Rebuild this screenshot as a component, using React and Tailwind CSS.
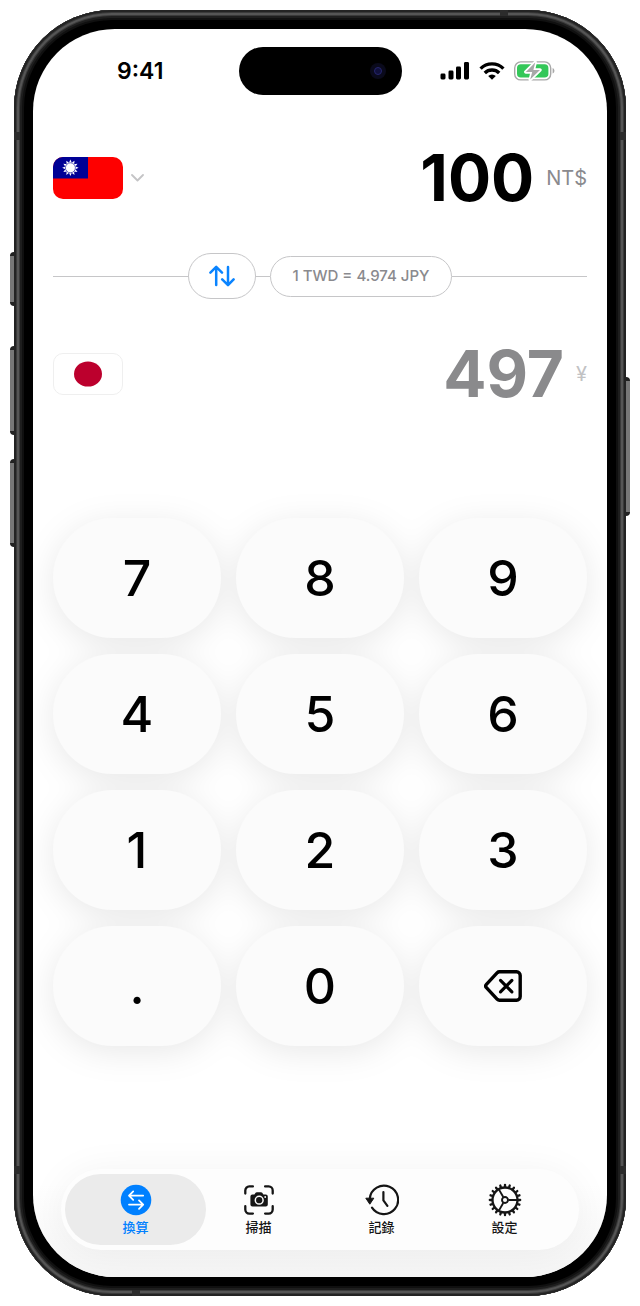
import { useState } from "react";

const keys = ["7", "8", "9", "4", "5", "6", "1", "2", "3", ".", "0", "del"];

const tabs = [
  { id: "convert", label: "換算", Icon: ConvertIcon },
  { id: "scan", label: "掃描", Icon: ScanIcon },
  { id: "history", label: "記錄", Icon: HistoryIcon },
  { id: "settings", label: "設定", Icon: GearIcon },
];

const rate = 4.974;

function SignalIcon() {
  return (
    <svg width="30" height="20" viewBox="0 0 30 20" fill="#000">
      <rect x="0.5" y="12.5" width="5" height="6" rx="1.4" />
      <rect x="8.5" y="9.5" width="5" height="9" rx="1.4" />
      <rect x="16" y="5.5" width="5" height="13" rx="1.4" />
      <rect x="24" y="1" width="5" height="17.5" rx="1.4" />
    </svg>
  );
}

function WifiIcon() {
  return (
    <svg width="26" height="20" viewBox="0 0 26 20" fill="none" stroke="#000" strokeWidth="3.4">
      <path d="M1.6 7.6A16.2 16.2 0 0 1 24.4 7.6" />
      <path d="M5.8 12A10.2 10.2 0 0 1 20.2 12" />
      <path d="M13 18.8 9.2 15A5.4 5.4 0 0 1 16.8 15Z" fill="#000" stroke="none" />
    </svg>
  );
}

function BatteryIcon() {
  return (
    <svg width="41" height="20" viewBox="0 0 41 20" fill="none">
      <rect x="0.7" y="0.9" width="36" height="18" rx="6" stroke="#a8a8a8" strokeWidth="1.4" />
      <rect x="3" y="3.2" width="31.4" height="13.4" rx="3.8" fill="#34c759" />
      <path d="M38.6 7v5.6c1.2-.5 1.8-1.5 1.8-2.8s-.6-2.3-1.8-2.8Z" fill="#a8a8a8" />
      <path
        d="M21.2 1.4 11.8 11h6.4l-2 7.6L26 9h-6.600Z"
        fill="#a8a8a8"
        stroke="#fff"
        strokeWidth="3.4"
        strokeLinejoin="round"
        paintOrder="stroke"
      />
    </svg>
  );
}

function TaiwanFlag() {
  return (
    <svg width="70" height="42" viewBox="0 0 70 42" className="rounded-[10px]">
      <rect width="70" height="42" fill="#fe0000" />
      <rect width="35" height="21.5" fill="#000095" />
      <g transform="translate(17.4 10.8)" fill="#fff">
        {[0, 30, 60, 90, 120, 150, 180, 210, 240, 270, 300, 330].map((deg) => (
          <path key={deg} d="M-1.600-4.500 0-8.200 1.600-4.500Z" transform={`rotate(${deg})`} />
        ))}
        <circle r="5" stroke="#000095" strokeWidth="0.6" />
      </g>
    </svg>
  );
}

function JapanFlag() {
  return (
    <svg width="70" height="42" viewBox="0 0 70 42">
      <rect x="0.5" y="0.5" width="69" height="41" rx="9.5" fill="#fff" stroke="#efefef" />
      <ellipse cx="35" cy="21" rx="14" ry="12.6" fill="#bc002d" />
    </svg>
  );
}

function SwapIcon() {
  return (
    <svg
      width="26"
      height="22"
      viewBox="0 0 26 22"
      fill="none"
      stroke="#0a84ff"
      strokeWidth="2.5"
      strokeLinecap="round"
      strokeLinejoin="round"
    >
      <path d="M7.2 20V2.2M1.4 7.6l5.800-5.800L13 7.600" />
      <path d="M19 2v17.800M13.200 14.400l5.800 5.800 5.600-5.800" />
    </svg>
  );
}

function DeleteIcon() {
  return (
    <svg
      width="38"
      height="32"
      viewBox="0 0 38 32"
      fill="none"
      stroke="#000"
      strokeWidth="3.4"
      strokeLinecap="round"
      strokeLinejoin="round"
    >
      <path d="M15.4 1.8h17.2a3.6 3.6 0 0 1 3.6 3.6v21.2a3.6 3.6 0 0 1-3.6 3.6H15.4a3 3 0 0 1-2.1-.9L2.4 17.6a2.3 2.3 0 0 1 0-3.2L13.3 2.7a3 3 0 0 1 2.1-.9Z" />
      <path d="m16.500 10.400 11.400 11.400M27.900 10.400 16.500 21.800" strokeWidth="3.2" />
    </svg>
  );
}

function ConvertIcon() {
  return (
    <svg width="32" height="32" viewBox="0 0 32 32" fill="none">
      <circle cx="16" cy="16" r="15.3" fill="#0080ff" />
      <g stroke="#fff" strokeWidth="1.8" strokeLinecap="round" strokeLinejoin="round">
        <path d="M23.2 11.6H9.2M13.2 7.4 9 11.6l4.2 4.2" />
        <path d="M9 20.6h14M19 16.4l4.2 4.2-4.2 4.2" />
      </g>
    </svg>
  );
}

function ScanIcon() {
  return (
    <svg width="32" height="32" viewBox="0 0 32 32" fill="none">
      <path
        d="M2.3 9.6V6.4a4 4 0 0 1 4-4h3.6M22.1 2.4h3.6a4 4 0 0 1 4 4v3.2M29.7 22.2v3.4a4 4 0 0 1-4 4h-3.6M9.9 29.6H6.3a4 4 0 0 1-4-4v-3.4"
        stroke="#151515"
        strokeWidth="2.3"
        strokeLinecap="round"
      />
      <path
        d="M9.4 10.400h2l1.200-1.600c.3-.4.7-.6 1.200-.6h4.200c.5 0 .9.2 1.200.6l1.200 1.600h2.400a2 2 0 0 1 2 2v8.200a2 2 0 0 1-2 2H9.400a2 2 0 0 1-2-2v-8.200a2 2 0 0 1 2-2Z"
        fill="#151515"
      />
      <circle cx="16.2" cy="16.2" r="3.9" stroke="#fcfcfc" strokeWidth="1.5" />
      <circle cx="22.2" cy="13" r="0.9" fill="#fcfcfc" />
    </svg>
  );
}

function HistoryIcon() {
  return (
    <svg width="34" height="32" viewBox="0 0 34 32" fill="none">
      <path
        d="M4.800 14.400A14.200 14.200 0 1 1 7 23.600"
        stroke="#151515"
        strokeWidth="2.2"
        strokeLinecap="round"
      />
      <path d="M0.800 14.200h8L4.800 20.200Z" fill="#151515" stroke="#151515" strokeLinejoin="round" />
      <path
        d="M18.400 8v8.400l4 5.400"
        stroke="#151515"
        strokeWidth="2.2"
        strokeLinecap="round"
        strokeLinejoin="round"
      />
    </svg>
  );
}

function GearIcon() {
  const teeth = Array.from({ length: 20 }, (_, i) => i * 18);
  return (
    <svg width="34" height="34" viewBox="0 0 34 34" fill="none" stroke="#151515">
      <g transform="translate(17 17)">
        {teeth.map((deg) => (
          <path key={deg} d="M0-13V-15.200" strokeWidth="2.3" strokeLinecap="round" transform={`rotate(${deg})`} />
        ))}
        <circle r="12.5" strokeWidth="2.3" />
        <circle r="3" strokeWidth="1.9" />
        {[90, 210, 330].map((deg) => (
          <path key={deg} d="M0-3.500V-12" strokeWidth="1.9" transform={`rotate(${deg})`} />
        ))}
      </g>
    </svg>
  );
}

function StatusBar() {
  return (
    <div className="grid grid-cols-[1fr_auto_1fr] items-center pt-[18px]">
      <span className="pl-[84px] text-[23px] leading-7 font-semibold">9:41</span>
      <div className="flex h-12 w-[163px] items-center justify-end rounded-full bg-black pr-4">
        <div className="flex size-4 items-center justify-center rounded-full bg-[#0a0a1c]">
          <div className="size-2 rounded-full border border-[#26266e] bg-[#10103c]" />
        </div>
      </div>
      <div className="flex items-center justify-end gap-[9px] pr-[52px]">
        <SignalIcon />
        <WifiIcon />
        <BatteryIcon />
      </div>
    </div>
  );
}

// metal frame with hardware buttons and antenna bands
function PhoneFrame({ children }) {
  return (
    <div className="relative mx-[14px] my-[10px]">
      <div className="absolute top-[242px] -left-1 h-[54px] w-2 rounded-l-sm border-y-4 border-[#222] bg-[#777]" />
      <div className="absolute top-[336px] -left-1 h-[89px] w-2 rounded-l-sm border-y-4 border-[#222] bg-[#777]" />
      <div className="absolute top-[449px] -left-1 h-[88px] w-2 rounded-l-sm border-y-4 border-[#222] bg-[#777]" />
      <div className="absolute top-[367px] -right-1 h-[139px] w-2 rounded-r-sm border-y-4 border-[#222] bg-[#777]" />
      <div className="relative rounded-[98px] bg-black p-[19px] shadow-[inset_0_0_0_2px_#232323,inset_0_0_0_3px_#3a3a3a,inset_0_0_0_5px_#555,inset_0_0_0_6px_#3a3a3a,inset_0_0_0_8px_#1e1e1e,inset_0_0_0_10px_#101010]">
        <div className="absolute top-[122px] left-0 h-2 w-[6px] bg-[#2c2c2c]" />
        <div className="absolute top-[122px] right-0 h-2 w-[6px] bg-[#2c2c2c]" />
        <div className="absolute bottom-[122px] left-0 h-2 w-[6px] bg-[#2c2c2c]" />
        <div className="absolute right-0 bottom-[122px] h-2 w-[6px] bg-[#2c2c2c]" />
        <div className="absolute top-0 right-[118px] h-[6px] w-2 bg-[#2c2c2c]" />
        <div className="absolute bottom-0 left-[118px] h-[6px] w-2 bg-[#2c2c2c]" />
        <div className="overflow-hidden rounded-[82px] bg-white">{children}</div>
      </div>
    </div>
  );
}

export default function App() {
  const [amount, setAmount] = useState("100");
  const [activeTab, setActiveTab] = useState("convert");

  const handleKey = (key) => {
    if (key === "del") {
      setAmount(amount.length > 1 ? amount.slice(0, -1) : "0");
    } else if (key === ".") {
      if (!amount.includes(".")) setAmount(amount + ".");
    } else {
      setAmount(amount === "0" ? key : amount + key);
    }
  };

  return (
    <div className="overflow-hidden bg-white font-[Inter,'Noto_Sans_CJK_TC',sans-serif] text-black">
      <PhoneFrame>
        <StatusBar />

        <main className="px-5 pt-[51px]">
          <div className="flex h-16 items-center justify-between">
            <button aria-label="TWD" className="flex items-center gap-2">
              <TaiwanFlag />
              <svg
                width="13"
                height="8"
                viewBox="0 0 13 8"
                fill="none"
                stroke="#c4c4c6"
                strokeWidth="1.8"
                strokeLinecap="round"
                strokeLinejoin="round"
              >
                <path d="m1 1 5.500 5.500L12 1" />
              </svg>
            </button>
            <div className="flex items-center gap-3">
              <output className="text-[64px] leading-[64px] font-bold">{amount}</output>
              <span className="text-xl text-[#8a8a8e]">NT$</span>
            </div>
          </div>

          <div className="my-[43px] flex items-center">
            <div className="h-px flex-1 bg-[#c6c6c8]" />
            <button
              aria-label="Swap"
              className="flex h-[46px] w-[68px] items-center justify-center rounded-full border border-[#c6c6c8]"
            >
              <SwapIcon />
            </button>
            <div className="h-px w-[14px] bg-[#c6c6c8]" />
            <div className="flex h-[41px] w-[182px] items-center justify-center rounded-full border border-[#c6c6c8] text-[15px] font-medium text-[#8a8a8e]">
              1 TWD = {rate} JPY
            </div>
            <div className="h-px flex-1 bg-[#c6c6c8]" />
          </div>

          <div className="flex h-16 items-center justify-between">
            <button aria-label="JPY">
              <JapanFlag />
            </button>
            <div className="flex items-center gap-3">
              <output className="text-[64px] leading-[64px] font-bold text-[#8a8a8c]">
                {Math.round(Number(amount) * rate)}
              </output>
              <span className="text-xl text-[#c2c2c4]">¥</span>
            </div>
          </div>

          <div className="mt-28 grid grid-cols-3 gap-x-[15px] gap-y-4 drop-shadow-[0_6px_16px_rgba(0,0,0,0.09)]">
            {keys.map((key) => (
              <button
                key={key}
                aria-label={key}
                onClick={() => handleKey(key)}
                className="flex h-[120px] items-center justify-center rounded-[60px] bg-[#fbfbfb] text-[50px] font-medium"
              >
                {key === "del" ? <DeleteIcon /> : key}
              </button>
            ))}
          </div>
        </main>

        <div className="bg-linear-to-b from-transparent from-60% to-[#f6f6f6] px-7 pt-[123px] pb-[27px]">
          <nav className="grid grid-cols-4 rounded-[40px] bg-[#fdfdfd] px-[13px] py-[5px] shadow-[0_4px_40px_rgba(0,0,0,0.06)]">
            {tabs.map(({ id, label, Icon }) => (
              <button
                key={id}
                onClick={() => setActiveTab(id)}
                className={`-mx-[9px] flex h-[71px] flex-col items-center rounded-full pt-[9px] text-[13px] leading-5 font-medium ${
                  activeTab === id ? "bg-[#ebebeb] text-[#0080ff]" : "text-[#151515]"
                }`}
              >
                <span className="flex h-[34px] items-center">
                  <Icon />
                </span>
                {label}
              </button>
            ))}
          </nav>
        </div>
      </PhoneFrame>
    </div>
  );
}
